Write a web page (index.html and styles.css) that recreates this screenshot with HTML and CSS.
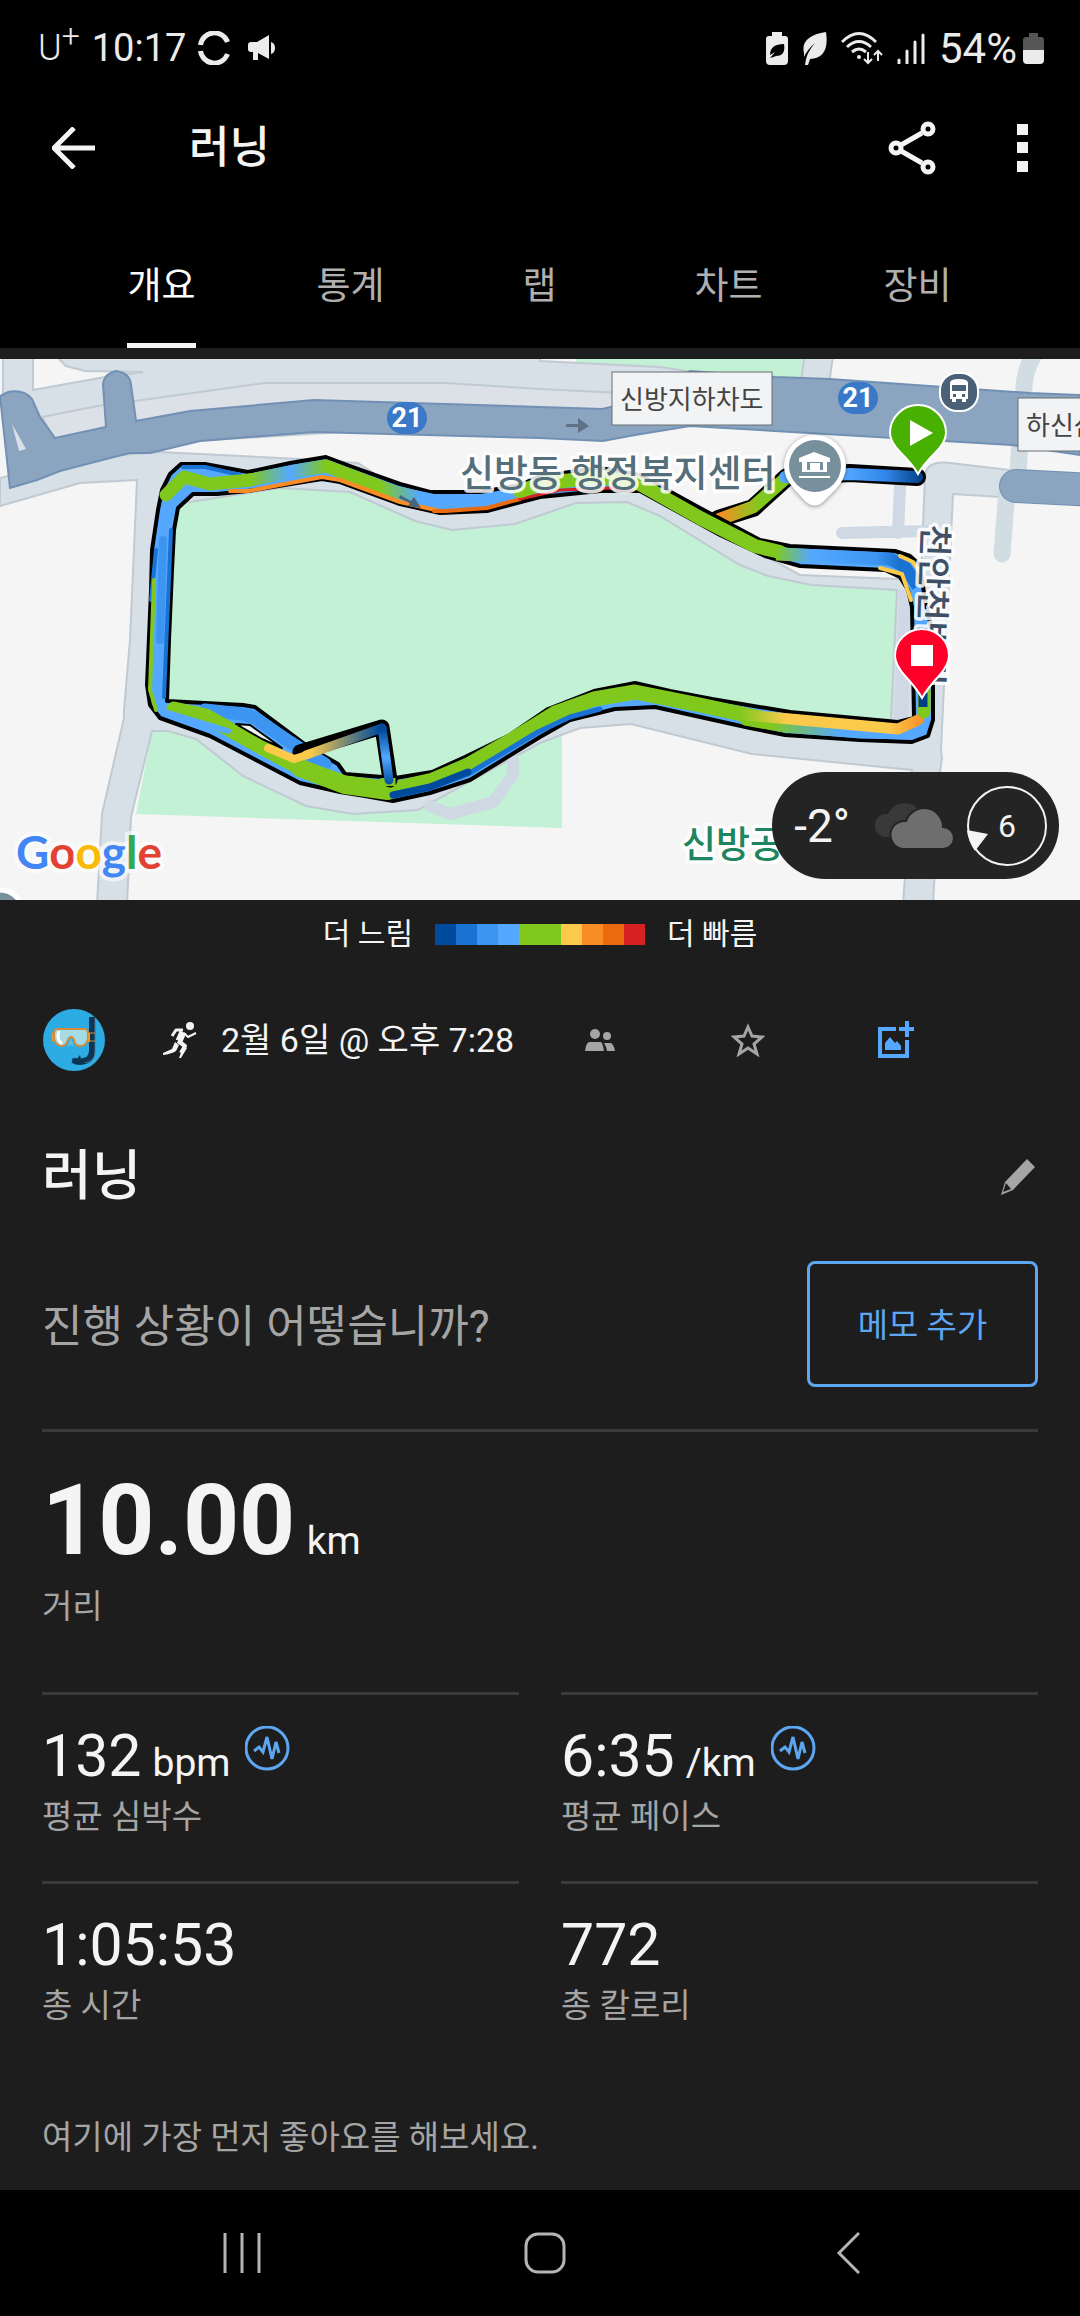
FILE: index.html
```html
<!DOCTYPE html>
<html lang="ko">
<head>
    <meta charset="UTF-8">
    <meta name="viewport" content="width=device-width, initial-scale=1.0">
    <title>러닝</title>
    <link rel="stylesheet" href="styles.css">
</head>
<body>
    <!-- Phone status bar -->
    <div class="status-bar">
        <div class="status-left">
            <span class="carrier">U<sup>+</sup></span>
            <span>10:17</span>
            <svg class="sync" width="32" height="34" viewBox="0 0 32 34"><path d="M2.500 14A14 14 0 0 1 29.500 11M2.500 20A14 14 0 0 0 29.500 23" fill="none" stroke="#ebebeb" stroke-width="5"/></svg>
            <svg class="horn" width="28" height="26" viewBox="0 0 28 26"><path d="M0 10q0-3 3-3h6l12-7v24L10 18v7H5v-8H3q-3 0-3-3zM23 7q4 1 4 6t-4 6z" fill="#ebebeb"/></svg>
        </div>
        <div class="status-right">
            <svg width="22" height="33" viewBox="0 0 22 33"><path d="M6 0h10v4h3q3 0 3 3v22q0 4-4 4H4q-4 0-4-4V7q0-3 3-3h3z" fill="#ebebeb"/><path d="M4 23q0-11 14-11 2 12-8 12-2 1-6 2l5-6z" fill="#000"/></svg>
            <svg width="25" height="33" viewBox="0 0 25 33"><path d="M2 21Q-2 4 24 0q4 26-16 27l-2 6H3q1-12 10-22Q5 18 2 25z" fill="#ebebeb"/></svg>
            <svg width="42" height="33" viewBox="0 0 42 33"><g fill="none" stroke="#ebebeb" stroke-width="3"><path d="M1 10q17-17 34 0M6 15q12-11 24 0M11 20q7-6 14 0"/><path d="M27 20v11m-4-4 4 4 4-4M37 29V19m-4 4 4-4 4 4" stroke-width="2"/></g><circle cx="18" cy="25" r="2" fill="#ebebeb"/></svg>
            <svg width="28" height="31" viewBox="0 0 28 31"><path d="M2 27v3M10 18v12M18 9v21M26 2v28" stroke="#ebebeb" stroke-width="3" stroke-linecap="round"/></svg>
            <span class="percent">54%</span>
            <svg class="battery" width="21" height="31" viewBox="0 0 21 31"><path d="M6 0h9v4h3q3 0 3 3v10H0V7q0-3 3-3h3z" fill="#555"/><path d="M0 17h21v10q0 4-4 4H4q-4 0-4-4z" fill="#ebebeb"/></svg>
        </div>
    </div>

    <header class="app-bar">
        <button class="icon-btn" aria-label="뒤로">
            <svg width="43" height="42" viewBox="0 0 43 42"><path d="M22 1 2 21l20 20M2 21h41" fill="none" stroke="#f4f4f4" stroke-width="5"/></svg>
        </button>
        <h1>러닝</h1>
        <button class="icon-btn share" aria-label="공유">
            <svg width="48" height="54" viewBox="0 0 48 54"><g fill="none" stroke="#f4f4f4" stroke-width="5"><path d="m13 24 21-12M13 30l21 12"/><circle cx="8" cy="27" r="5"/><circle cx="40" cy="8" r="5"/><circle cx="40" cy="46" r="5"/></g></svg>
        </button>
        <button class="icon-btn" aria-label="더보기">
            <svg width="11" height="48" viewBox="0 0 11 48"><path d="M0 0h11v11H0zM0 18h11v11H0zM0 37h11v11H0z" fill="#f4f4f4"/></svg>
        </button>
    </header>

    <nav class="tabs">
        <a href="#overview" class="active"><span>개요</span></a>
        <a href="#stats"><span>통계</span></a>
        <a href="#laps"><span>랩</span></a>
        <a href="#charts"><span>차트</span></a>
        <a href="#gear"><span>장비</span></a>
    </nav>

    <main>
        <div class="map">
            <svg class="map-svg" viewBox="0 359 1080 541">
                <defs>
                    <linearGradient id="startFade" gradientUnits="userSpaceOnUse" x1="845" y1="0" x2="925" y2="0">
                        <stop offset="0" stop-color="#54a8ff"/><stop offset="0.5" stop-color="#3187ea"/><stop offset="1" stop-color="#003c80"/>
                    </linearGradient>
                    <linearGradient id="branchFade" gradientUnits="userSpaceOnUse" x1="718" y1="0" x2="760" y2="0">
                        <stop offset="0" stop-color="#fa8c26"/><stop offset="1" stop-color="#80c91c"/>
                    </linearGradient>
                    <linearGradient id="topFade" gradientUnits="userSpaceOnUse" x1="250" y1="0" x2="450" y2="0">
                        <stop offset="0" stop-color="#80c91c"/><stop offset="0.2" stop-color="#54a8ff"/><stop offset="0.38" stop-color="#80c91c"/><stop offset="0.65" stop-color="#80c91c"/><stop offset="0.85" stop-color="#54a8ff"/>
                    </linearGradient>
                    <linearGradient id="rightFade" gradientUnits="userSpaceOnUse" x1="775" y1="0" x2="920" y2="0">
                        <stop offset="0" stop-color="#80c91c"/><stop offset="0.25" stop-color="#54a8ff"/><stop offset="0.7" stop-color="#3d95f2"/><stop offset="0.85" stop-color="#1a73d2"/>
                    </linearGradient>
                    <linearGradient id="bottomFade" gradientUnits="userSpaceOnUse" x1="740" y1="0" x2="925" y2="0">
                        <stop offset="0" stop-color="#80c91c"/><stop offset="0.25" stop-color="#fbca4b"/><stop offset="0.8" stop-color="#fbca4b"/><stop offset="1" stop-color="#fa8c26"/>
                    </linearGradient>
                    <linearGradient id="blueFade" gradientUnits="userSpaceOnUse" x1="770" y1="0" x2="840" y2="0">
                        <stop offset="0" stop-color="#80c91c"/><stop offset="1" stop-color="#54a8ff"/>
                    </linearGradient>
                    <linearGradient id="spikeFade" gradientUnits="userSpaceOnUse" x1="310" y1="0" x2="380" y2="0">
                        <stop offset="0" stop-color="#fbca4b"/><stop offset="1" stop-color="#004b9d"/>
                    </linearGradient>
                    <linearGradient id="spikeDown" gradientUnits="userSpaceOnUse" x1="0" y1="730" x2="0" y2="785">
                        <stop offset="0" stop-color="#004b9d"/><stop offset="0.5" stop-color="#54a8ff"/><stop offset="1" stop-color="#004b9d"/>
                    </linearGradient>
                </defs>

                <rect x="0" y="359" width="1080" height="541" fill="#f5f5f5"/>

                <!-- parks -->
                <path d="M576 355h227l-2 30H576zM152 731l-16 83 426 14V730H400z" fill="#c3f1d5"/>

                <!-- local roads -->
                <g fill="#d7dfe7" stroke="#c0cad2" stroke-width="2">
                    <path d="M3 350v60l50 40 640-40v-38l-33-5-120-6V350z"/>
                    <path d="M0 506L80 483 137 480 130 640 124 710 124 718 102 814 97 905H127L131 817 152 731H168L196 739 243 776 306 806 353 814 418 810 540 743 580 728 631 724 752 754 912 770 903 905H933L940 772 942 758 941 750 953 494 1000 497 1010 470 950 463Q927 460 925 475L921 580 800 575 700 520 640 485 590 480 415 500 358 463 320 460 160 452 80 458 0 478z"/>
                    <path d="M805 350l-4 32 28 2 5-34z"/>
                </g>
                <path d="M33 350v40l72-13 38-5-58-1-19-5-8-8v-8z" fill="#f5f5f5" stroke="#c0cad2" stroke-width="2"/>
                <path d="M42 417l61-12 32-4 130-18h180l95 6 80 4v20L55 440z" fill="#dce1e8" stroke="#c0cad2" stroke-width="2"/>
                <g fill="none" stroke="#ced9e4" stroke-width="12" stroke-linecap="round">
                    <path d="M842 533l84-2M900 487l-2 46M430 806l20 8 43-12 20-27v-15"/>
                    <path d="M1037 350q-15 22-13 46M1020 440l-2 34M1007 490l-5 64" stroke="#d2dce3" stroke-width="17"/>
                </g>

                <!-- highway -->
                <path d="M0 396l8-4q16-3 24 7l8 18 15 21 51-11-3-43q2-11 13-13 14 2 15 14l5 36 54-10 124-11 226 7 62 2 40-9 48-29 85 6 55 2 200 14 50 2v60l-68-10-322-19-55 9-32 6-63-3-226-6-114 9-50 12h-20l-20 5-50 13-23 9-27 8z" fill="#8ba5c1" stroke="#7190b3" stroke-width="2"/>
                <path d="M12 424l14 25-7 2z" fill="#d7dfe7"/>
                <path d="M1016 486l80 4" stroke="#7190b3" stroke-width="34" stroke-linecap="round"/>
                <path d="M1016 486l80 4" stroke="#8ba5c1" stroke-width="32" stroke-linecap="round"/>
                <path d="M566 424h12v-6l11 8-11 7v-6h-12z" fill="#5f7184"/>

                <!-- park inside the loop -->
                <path d="M170 505L280 488 350 492 415 521 452 530 515 524 576 503 627 502 660 516 740 565 768 576 812 585 897 590 891 720 740 710 635 690 540 735 430 780H330L165 700z" fill="#c3f1d5" stroke="#c0cad2" stroke-width="2"/>
                <path d="M899 590h12l-3 130h-14z" fill="#cfd8e4"/>

                <!-- run track -->
                <g fill="none" stroke-linejoin="round" stroke-linecap="round">
                    <path d="M718 519L753 508 787 477 850 473 917 477" stroke="#000" stroke-width="18"/>
                    <path d="M715 521L753 507 787 477" stroke="url(#branchFade)" stroke-width="13" stroke-linecap="butt"/>
                    <path d="M785 477L850 474 917 477" stroke="url(#startFade)" stroke-width="12"/>

                    <path fill-rule="evenodd" d="M162 490L170 474 181 464H205L248 472 290 463 326 457 350 466 400 484 430 492H480L520 485 540 476 600 468 640 475 700 508 760 540 790 546 895 551 910 556 920 565 925 600 933 635V720L928 736 912 742 860 740 785 735 750 728 655 707 615 709 570 720 540 737 470 780 430 793 393 801 365 796 340 792 300 783 210 736 160 718 150 705 147 685 151 590 152 550 158 510zM178 508L193 494H217L248 491 322 479 340 482 400 504 440 513 487 511 540 497 600 491H640L720 535 765 556 800 566 885 570 900 577 908 590 912 607 914 718 898 722 790 712 712 699 670 691 635 683 594 691 548 709 510 735 465 757 432 772 395 778 345 774 338 764 310 748 255 707 243 705 167 701 169 640 172 570 174 530z" fill="#54a8ff" stroke="#000" stroke-width="4"/>
                    <path d="M183 467H205L240 475M156 550L151 600M171 530L164 697" stroke="#1a73d2" stroke-width="4"/>
                    <path d="M166 495L184 477 210 484 250 480" stroke="#80c91c" stroke-width="13"/>
                    <path d="M245 481L290 472 326 466 395 492 450 504" stroke="url(#topFade)" stroke-width="13" stroke-linecap="butt"/>
                    <path d="M230 491H248L290 483 322 477 340 480 400 502 440 511" stroke="#fa8c26" stroke-width="4"/>
                    <path d="M434 511L446 511 487 508 520 499" stroke="#ec6a0e" stroke-width="4"/>
                    <path d="M520 499L560 490 610 488 640 489 680 511" stroke="#d62222" stroke-width="3"/>
                    <path d="M520 491L545 483 600 477 638 483 700 518 755 546 780 552" stroke="#80c91c" stroke-width="14"/>
                    <path d="M776 554L890 559 904 566 918 586" stroke="url(#rightFade)" stroke-width="13" stroke-linecap="butt"/>
                    <path d="M900 556L913 562 920 572M880 568L902 574 911 600" stroke="#fbca4b" stroke-width="4"/>
                    <path d="M154 580L150 690 156 710" stroke="#80c91c" stroke-width="4"/>
                    <path d="M163 540L160 640" stroke="#3d95f2" stroke-width="8"/>

                    <path d="M205 710L243 714 255 718 290 742 325 764" stroke="#3d95f2" stroke-width="13"/>
                    <path d="M174 709L206 716 250 741 300 768 345 783 393 789 433 780 468 765 510 741 555 713 594 699 635 692 700 705 760 718" stroke="#80c91c" stroke-width="15"/>
                    <path d="M300 768L345 785 388 791" stroke="#80c91c" stroke-width="18"/>
                    <path d="M236 724l14 1 32 23-20-9z" fill="#e9f5ee" stroke="#000" stroke-width="2"/>
                    <path d="M300 752L382 727 390 780" stroke="#000" stroke-width="15"/>
                    <path d="M388 778L388 786" stroke="#80c91c" stroke-width="15" stroke-linecap="butt"/>
                    <path d="M168 713L228 731" stroke="#54a8ff" stroke-width="6"/>
                    <path d="M745 721L785 728 860 734 908 735" stroke="url(#blueFade)" stroke-width="9"/>
                    <path d="M735 714L790 719 898 729 918 720" stroke="url(#bottomFade)" stroke-width="11"/>
                    <path d="M924 712V690" stroke="#80c91c" stroke-width="13"/>
                    <path d="M923 693v14" stroke="#003c80" stroke-width="9" stroke-linecap="butt"/>
                    <path d="M393 796L430 788 468 774 538 732 570 717 600 709" stroke="#1a73d2" stroke-width="5"/>
                    <path d="M393 795L430 787 468 772" stroke="#004b9d" stroke-width="7"/>
                    <path d="M268 748L294 759 310 754" stroke="#fbca4b" stroke-width="8"/>
                    <path d="M306 755L382 728" stroke="url(#spikeFade)" stroke-width="9"/>
                    <path d="M382 728L389 780" stroke="url(#spikeDown)" stroke-width="9"/>
                </g>
                <path d="M400 495l11 6 3-4 7 11-13-2 2-3-11-5z" fill="#48647f"/>

                <!-- map labels -->
                <g class="map-label">
                    <text class="place" x="460" y="487">신방동 행정복지센터</text>
                    <text class="park" x="682" y="858">신방공원</text>
                    <text class="street" transform="translate(923 524) rotate(92)">천안천변길</text>
                </g>
                <g fill="#f1f3f5" stroke="#6b6f73" stroke-width="1">
                    <rect x="612" y="372" width="160" height="53"/>
                    <rect x="1018" y="398" width="120" height="53"/>
                </g>
                <text class="sign" x="620" y="409">신방지하차도</text>
                <text class="sign" x="1026" y="435">하신삼</text>
                <g fill="#3a78c8">
                    <rect x="387" y="402" width="40" height="32" rx="16"/>
                    <rect x="838" y="382" width="40" height="32" rx="16"/>
                </g>
                <text class="route" x="407" y="427">21</text>
                <text class="route" x="858" y="407">21</text>

                <!-- bus stop -->
                <rect x="940" y="373" width="38" height="38" rx="17" fill="#4a6178" stroke="#fff" stroke-width="2"/>
                <path fill-rule="evenodd" d="M950 383q0-4 9-4t9 4v16h-2v3h-4v-3h-6v3h-4v-3h-2zM952 385h14v6h-14zM953 394h3v3h-3zM962 394h3v3h-3z" fill="#fff"/>

                <!-- public office marker -->
                <path class="marker" d="M784 466A31 31 0 0 1 846 466Q846 478 836 489L824 501Q815 510 805 501L794 489Q784 478 784 466z" fill="#fff"/>
                <circle cx="815" cy="466" r="26" fill="#78909c"/>
                <path d="M799 462v-4l15-6 16 6v4zM799 476h31v2h-31zM802 462h5v8h3v-7h10v7h3v-8h4v10h-25z" fill="#fff"/>
                <path d="M812 463h4v8h-4z" fill="#fff"/>

                <circle cx="0" cy="913" r="23" fill="#78909c" stroke="#fff" stroke-width="5"/>

                <!-- start and end pins -->
                <path d="M918 474q-5-9-17-21-11-11-11-20a28 28 0 0 1 56 0q0 9-11 20-12 12-17 21z" fill="#48b000" stroke="#fff" stroke-width="2"/>
                <path d="M910 420v26l23-13z" fill="#fff"/>
                <path d="M922 698q-5-9-16-21-11-12-11-21a27 27 0 0 1 54 0q0 9-11 21-11 12-16 21z" fill="#ff0029" stroke="#fff" stroke-width="2"/>
                <path d="M911 645h22v21h-22z" fill="#fff"/>

                <text class="google" x="16" y="869"><tspan fill="#4285f4">G</tspan><tspan fill="#e34133">o</tspan><tspan fill="#f9bb05">o</tspan><tspan fill="#4285f4">g</tspan><tspan fill="#34a853">l</tspan><tspan fill="#e34133">e</tspan></text>
            </svg>

            <div class="weather">
                <span class="temp">-2°</span>
                <svg class="clouds" width="82" height="48" viewBox="0 0 82 48"><path d="M13 35a11 11 0 0 1 3-23 18 18 0 0 1 32-2L24 35z" fill="#393939"/><path d="M31 47a14 14 0 1 1 3-28 19 19 0 0 1 37 6 11 11 0 0 1 0 22z" fill="#6e6e6e" stroke="#242424" stroke-width="2"/></svg>
                <span class="wind">
                    <svg width="82" height="82" viewBox="0 0 82 82"><circle cx="41" cy="41" r="39" fill="none" stroke="#f4f4f4" stroke-width="2"/><path d="M1 45l21 4L9 66Q2 56 1 45z" fill="#f4f4f4"/></svg>
                    <b>6</b>
                </span>
            </div>
        </div>

        <div class="legend">
            <span>더 느림</span>
            <div class="scale">
                <i class="s1"></i><i class="s2"></i><i class="s3"></i><i class="s4"></i><i class="s5"></i><i class="s5"></i><i class="s6"></i><i class="s7"></i><i class="s8"></i><i class="s9"></i>
            </div>
            <span>더 빠름</span>
        </div>

        <div class="meta">
            <svg class="avatar" width="62" height="62" viewBox="0 0 62 62">
                <circle cx="31" cy="31" r="31" fill="#2cace3"/>
                <path d="M49 8v34q0 10-12 11-4 0-7-2" fill="none" stroke="#0b3554" stroke-width="6"/>
                <path d="M52 9v34q0 9-10 11" fill="none" stroke="#55728a" stroke-width="1"/>
                <path d="M29 49l4 2 4-5 1 4 5-2-4 7h-7q-3-2-3-6z" fill="#0b3554"/>
                <path d="M9 24h4v8H9zM44 24h8M44 32h8" fill="#f5b324" stroke="#d58b3c" stroke-width="1"/>
                <path d="M15 20h26q4 0 4 4v5q-1 8-8 8-5 0-6-6-1-3-3-3t-3 3q-2 6-6 6-8-1-8-9v-4q0-4 4-4z" fill="#a5dbe5" stroke="#d58b3c" stroke-width="2"/>
                <path d="M16 22q-3 8 3 13" fill="none" stroke="#fff" stroke-width="3"/>
                <path d="M28 29l-4 9 4-2 3 2z" fill="#5fc0e0"/>
                <path d="M45 24h2v9h-2z" fill="#f59a1d"/>
            </svg>
            <svg class="runner" width="34" height="36" viewBox="0 0 34 36">
                <circle cx="27" cy="4" r="4" fill="#f4f4f4"/>
                <g fill="none" stroke="#f4f4f4" stroke-linejoin="round">
                    <path d="M20 10l-4 9" stroke-width="7"/>
                    <path d="M20 8h-7l-4 6" stroke-width="3"/>
                    <path d="M21 11l4 4 8-4" stroke-width="2"/>
                    <path d="M15 19l7 5-4 7" stroke-width="4"/>
                </g>
                <path d="M20 25l4 1-6 10h-2zM12 20l4 3-3 6q-5 3-13 4v-2l9-4z" fill="#f4f4f4"/>
            </svg>
            <time>2월 6일 @ 오후 7:28</time>
            <div class="actions">
                <button aria-label="공개 범위">
                    <svg width="30" height="24" viewBox="0 0 30 24"><circle cx="10" cy="6" r="5" fill="#a5a5a5"/><circle cx="22" cy="8" r="4" fill="#a5a5a5"/><path d="M0 23q1-8 4-9h12q2 2 3 9zM19 15h7q3 2 4 8h-8q-1-5-3-8z" fill="#a5a5a5"/></svg>
                </button>
                <button aria-label="즐겨찾기">
                    <svg width="34" height="34" viewBox="0 0 34 34"><path d="M17 4l4 9 10 1-8 7 3 10-9-6-9 6 3-10-8-7 10-1z" fill="none" stroke="#a5a5a5" stroke-width="3"/></svg>
                </button>
                <button aria-label="사진 추가">
                    <svg width="36" height="38" viewBox="0 0 36 38"><path d="M18 8H2v27h27V19" fill="none" stroke="#54a8ff" stroke-width="4"/><path d="M29 0v16M21 8h15" stroke="#54a8ff" stroke-width="4"/><path d="M7 29v-7l5-6 5 6 2-2 4 5v4z" fill="#54a8ff"/></svg>
                </button>
            </div>
        </div>

        <div class="title-row">
            <h2>러닝</h2>
            <button class="edit" aria-label="이름 편집">
                <svg width="36" height="36" viewBox="0 0 36 36"><path fill-rule="evenodd" d="M27 0l8 8-22 23-12 5 4-13zM6 24l-3 9 8-3z" fill="#a5a5a5"/></svg>
            </button>
        </div>

        <div class="note">
            <p>진행 상황이 어떻습니까?</p>
            <button class="note-btn">메모 추가</button>
        </div>

        <section class="distance">
            <div class="value">10.00 <small>km</small></div>
            <div class="label">거리</div>
        </section>

        <section class="stats">
            <div class="stat">
                <div class="value">132 <small>bpm</small>
                    <svg class="pulse" width="45" height="45" viewBox="0 0 45 45"><circle cx="22" cy="22" r="21" fill="none" stroke="#5ca6f2" stroke-width="3"/><path d="M9 25l5-4 4 5 4-15 5 22 4-17 3 11" fill="none" stroke="#5ca6f2" stroke-width="3"/></svg>
                </div>
                <div class="label">평균 심박수</div>
            </div>
            <div class="stat">
                <div class="value">6:35 <small>/km</small>
                    <svg class="pulse" width="45" height="45" viewBox="0 0 45 45"><circle cx="22" cy="22" r="21" fill="none" stroke="#5ca6f2" stroke-width="3"/><path d="M9 25l5-4 4 5 4-15 5 22 4-17 3 11" fill="none" stroke="#5ca6f2" stroke-width="3"/></svg>
                </div>
                <div class="label">평균 페이스</div>
            </div>
            <div class="stat">
                <div class="value">1:05:53</div>
                <div class="label">총 시간</div>
            </div>
            <div class="stat">
                <div class="value">772</div>
                <div class="label">총 칼로리</div>
            </div>
        </section>

        <p class="likes">여기에 가장 먼저 좋아요를 해보세요.</p>
    </main>

    <!-- Phone navigation bar -->
    <footer class="nav-bar">
        <button aria-label="최근 앱"><svg width="40" height="42" viewBox="0 0 40 42"><path d="M3 1v40M20 1v40M37 1v40" stroke="#b4b4b4" stroke-width="3"/></svg></button>
        <button aria-label="홈"><svg width="42" height="42" viewBox="0 0 42 42"><rect x="2" y="2" width="38" height="38" rx="12" fill="none" stroke="#b4b4b4" stroke-width="3"/></svg></button>
        <button aria-label="뒤로"><svg width="24" height="42" viewBox="0 0 24 42"><path d="M23 1 3 21l20 20" fill="none" stroke="#b4b4b4" stroke-width="3"/></svg></button>
    </footer>
</body>
</html>
```

FILE: styles.css
```css
* {
    box-sizing: border-box;
}
body {
    font-family: Roboto, "Noto Sans CJK KR", sans-serif;
    background-color: #000;
    color: #f4f4f4;
    margin: 0;
    min-height: 100vh;
    display: flex;
    flex-direction: column;
}
h1, h2, p {
    margin: 0;
}
svg {
    display: block;
    flex: none;
}
button {
    background: none;
    border: 0;
    padding: 0;
    font-family: inherit;
    display: flex;
    align-items: center;
    justify-content: center;
}

/* status bar */
.status-bar {
    height: 96px;
    padding: 0 36px 0 38px;
    display: flex;
    justify-content: space-between;
    align-items: center;
    font-size: 38px;
    color: #ebebeb;
}
.status-left, .status-right {
    display: flex;
    align-items: center;
    gap: 12px;
}
.carrier {
    font-size: 36px;
    font-weight: 300;
}
.carrier sup {
    font-size: 32px;
    line-height: 0;
}
.horn {
    margin-left: 6px;
}
.status-right {
    gap: 14px;
}
.percent {
    font-size: 42px;
}
.battery {
    margin-left: -8px;
}

/* app bar */
.app-bar {
    height: 104px;
    padding: 0 52px;
    display: flex;
    align-items: center;
}
.app-bar h1 {
    flex: 1;
    margin-left: 94px;
    font-size: 44px;
    line-height: 60px;
    font-weight: 500;
}
.share {
    margin-right: 81px;
}

.tabs {
    height: 148px;
    padding: 0 68px 0 67px;
    display: flex;
}
.tabs a {
    flex: 1;
    display: flex;
    justify-content: center;
    color: #b0b0b0;
    font-size: 37px;
    text-decoration: none;
}
.tabs span {
    padding-top: 31px;
    line-height: 112px;
    border-bottom: 5px solid transparent;
}
.tabs a.active {
    color: #fff;
}
.tabs a.active span {
    border-color: #f4f4f4;
}

main {
    flex: 1;
    background-color: #1d1d1d;
    padding-top: 11px;
}

/* map */
.map {
    position: relative;
}
.map-svg {
    width: 100%;
    height: auto;
}
.map-label text {
    paint-order: stroke;
    stroke: #fff;
    stroke-opacity: 0.85;
    stroke-width: 7px;
    stroke-linejoin: round;
    font-size: 37px;
}
.map-label .place {
    fill: #546e7a;
    font-weight: 500;
}
.map-label .park {
    fill: #1f8560;
    font-weight: 500;
}
.map-label .street {
    fill: #3f4f66;
    font-size: 35px;
    font-weight: 500;
}
.marker {
    filter: drop-shadow(0 1px 2px rgba(0, 0, 0, 0.4));
}
.sign {
    fill: #444;
    font-size: 26px;
}
.route {
    fill: #fff;
    font-size: 27px;
    font-weight: 700;
    text-anchor: middle;
}
.google {
    font-family: Lato, sans-serif;
    font-size: 46px;
    font-weight: 700;
    paint-order: stroke;
    stroke: #fff;
    stroke-opacity: 0.6;
    stroke-width: 8px;
    stroke-linejoin: round;
}
.weather {
    position: absolute;
    right: 21px;
    bottom: 21px;
    height: 107px;
    padding: 0 11px 0 22px;
    border-radius: 54px;
    background-color: #242424;
    display: flex;
    align-items: center;
}
.temp {
    font-size: 46px;
}
.clouds {
    margin: 0 12px 0 22px;
}
.wind {
    display: grid;
    place-items: center;
}
.wind > * {
    grid-area: 1 / 1;
}
.wind b {
    font-size: 32px;
    font-weight: 400;
}

.legend {
    height: 68px;
    display: flex;
    justify-content: center;
    align-items: center;
    gap: 22px;
    font-size: 30px;
    line-height: 40px;
}
.scale {
    display: flex;
}
.scale i {
    width: 21px;
    height: 21px;
}
.s1 { background: #004b9d; }
.s2 { background: #1a73d2; }
.s3 { background: #3d95f2; }
.s4 { background: #54a8ff; }
.s5 { background: #80c91c; }
.s6 { background: #fbca4b; }
.s7 { background: #fa8c26; }
.s8 { background: #ec6a0e; }
.s9 { background: #d62222; }

/* activity details */
.meta {
    margin: 41px 110px 0 43px;
    display: flex;
    align-items: center;
}
.runner {
    margin: 0 24px 0 58px;
}
.meta time {
    font-size: 34px;
    line-height: 40px;
}
.actions {
    margin-left: auto;
    display: flex;
}
.actions button {
    width: 148px;
    height: 62px;
}
.title-row {
    margin: 66px 44px 0 42px;
    height: 80px;
    display: flex;
    justify-content: space-between;
    align-items: center;
}
.title-row h2 {
    font-size: 54px;
    line-height: 76px;
    font-weight: 500;
}
.note {
    margin: 44px 42px 0;
    padding-bottom: 42px;
    border-bottom: 3px solid #3a3a3a;
    display: flex;
    justify-content: space-between;
    align-items: center;
    color: #a5a5a5;
    font-size: 44px;
}
.note p {
    padding-bottom: 3px;
}
.note-btn {
    width: 231px;
    height: 126px;
    padding-bottom: 2px;
    border: 3px solid #5ca6f2;
    border-radius: 8px;
    color: #5ca6f2;
    font-size: 33px;
}
.value small {
    font-size: 39px;
}
.label {
    color: #a5a5a5;
    font-size: 33px;
    line-height: 40px;
}
.distance {
    margin: 38px 42px 0;
}
.distance .value {
    height: 100px;
    font-size: 98px;
    line-height: 102px;
    font-weight: 700;
}
.distance small {
    font-weight: 400;
    margin-left: -13px;
}
.distance .label {
    margin-top: 17px;
}
.stats {
    margin: 65px 42px 0;
    display: grid;
    grid-template-columns: 1fr 1fr;
    column-gap: 42px;
}
.stat {
    height: 189px;
    padding-top: 26px;
    border-top: 3px solid #3a3a3a;
}
.stat .value {
    height: 70px;
    display: flex;
    align-items: baseline;
    gap: 11px;
    font-size: 59px;
    line-height: 70px;
}
.pulse {
    align-self: flex-start;
    margin: 5px 0 0 4px;
}
.stat .label {
    margin-top: 6px;
}
.likes {
    margin: 48px 42px 32px;
    color: #a5a5a5;
    font-size: 33px;
    line-height: 40px;
}

.nav-bar {
    height: 126px;
    padding: 0 81px 0 91px;
    display: flex;
}
.nav-bar button {
    flex: 1;
}
```
